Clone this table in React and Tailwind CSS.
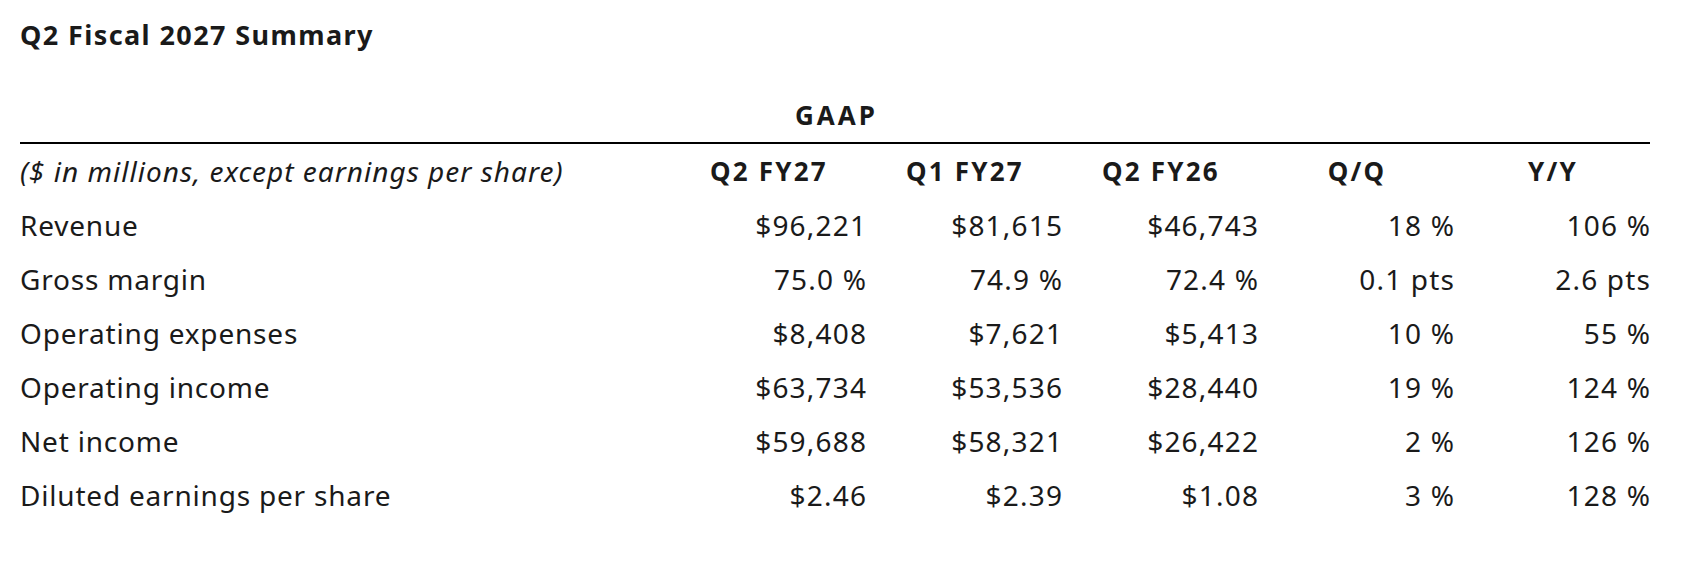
import React from 'react';

const columns = ['Q2 FY27', 'Q1 FY27', 'Q2 FY26', 'Q/Q', 'Y/Y'];

const rows = [
  { label: 'Revenue', values: ['$96,221', '$81,615', '$46,743', '18 %', '106 %'] },
  { label: 'Gross margin', values: ['75.0 %', '74.9 %', '72.4 %', '0.1 pts', '2.6 pts'] },
  { label: 'Operating expenses', values: ['$8,408', '$7,621', '$5,413', '10 %', '55 %'] },
  { label: 'Operating income', values: ['$63,734', '$53,536', '$28,440', '19 %', '124 %'] },
  { label: 'Net income', values: ['$59,688', '$58,321', '$26,422', '2 %', '126 %'] },
  { label: 'Diluted earnings per share', values: ['$2.46', '$2.39', '$1.08', '3 %', '128 %'] }
];

const gridCols = 'grid grid-cols-[650px_196px_196px_196px_196px_196px]';

export default function App() {
  return (
    <div className="h-[582px] w-[1696px] bg-white pl-[20px] font-['Noto_Sans',sans-serif] text-[#1a1a1a]">
      <h1 className="pt-[17px] text-[27px] leading-[36px] font-bold tracking-[1.4px]">Q2 Fiscal 2027 Summary</h1>

      <div className="mt-[35px] w-[1630px]">
        <div className="pl-[3px] text-center text-[26px] leading-[54px] font-bold tracking-[3px]">GAAP</div>
        <div className="h-[2px] bg-black" />

        <div className={gridCols}>
          <div className="text-[28px] leading-[54px] italic tracking-[1px]">($ in millions, except earnings per share)</div>
          {columns.map((col) => (
            <div key={col} className="pl-[2px] text-center text-[26px] leading-[54px] font-bold tracking-[2.2px]">
              {col}
            </div>
          ))}
        </div>

        {rows.map((row) => (
          <div key={row.label} className={gridCols}>
            <div className="text-[28px] leading-[54px] tracking-[0.8px]">{row.label}</div>
            {row.values.map((v, i) => (
              <div key={i} className="-mr-[1.2px] text-right text-[28px] leading-[54px] tracking-[1.2px]">
                {v}
              </div>
            ))}
          </div>
        ))}
      </div>
    </div>
  );
}
